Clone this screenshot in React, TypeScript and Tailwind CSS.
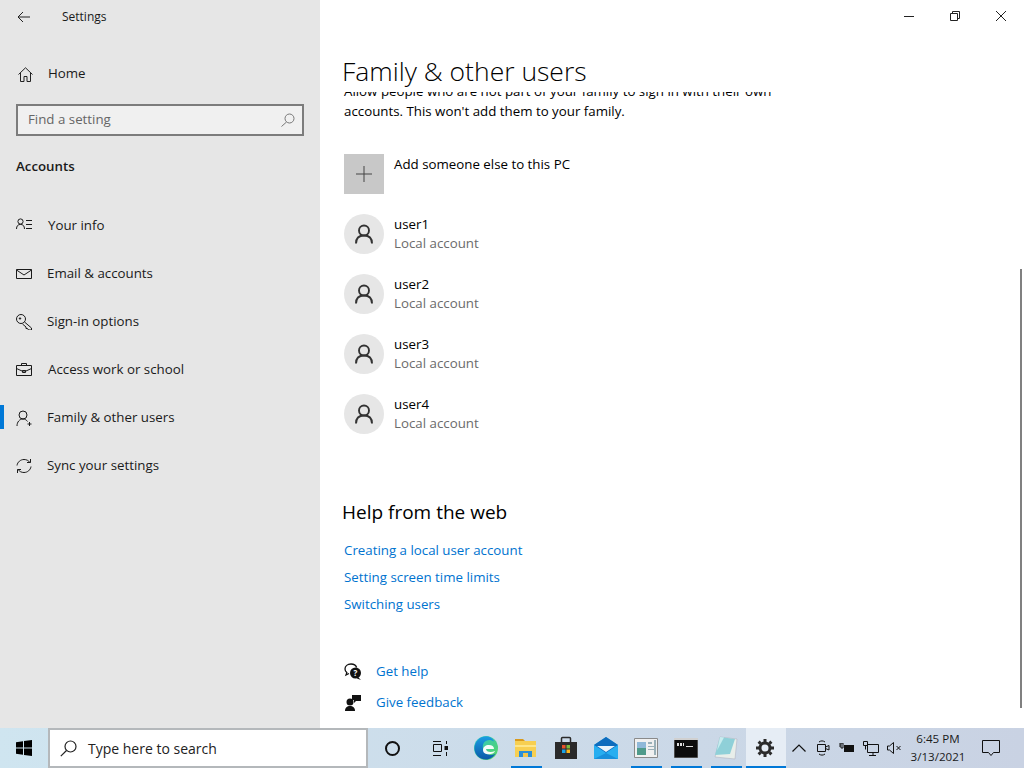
import type { ReactNode } from 'react';

const font = { fontFamily: '"Open Sans", "Noto Sans", sans-serif' };

function Ico({ children, w = 16, h = 16 }: { children: ReactNode; w?: number; h?: number }) {
  return (
    <svg width={w} height={h} viewBox={`0 0 ${w} ${h}`} fill="none" stroke="currentColor" strokeWidth="1" className="shrink-0">
      {children}
    </svg>
  );
}

const navItems: { label: string; gap: string; active?: boolean; icon: ReactNode }[] = [
  {
    label: 'Your info',
    gap: 'ml-[16px]',
    icon: (
      <Ico>
        <circle cx="4.5" cy="3.5" r="2.6" />
        <path d="M0.5 11c0-3 1.5-4.6 4-4.6s4 1.6 4 4.6M10 2.5h6M10 6.5h6M10 10.5h6" />
      </Ico>
    ),
  },
  {
    label: 'Email & accounts',
    gap: 'ml-[15px]',
    icon: (
      <Ico>
        <path d="M0.5 3.5h15v9h-15zM0.5 4l7.5 5 7.5-5" />
      </Ico>
    ),
  },
  {
    label: 'Sign-in options',
    gap: 'ml-[15px]',
    icon: (
      <Ico>
        <circle cx="5" cy="5" r="4.5" />
        <circle cx="4" cy="4.5" r="0.7" fill="currentColor" />
        <path d="M8.5 8l7 6v2h-3l-1-1.5h-1.5v-1.5l-3.5-3" />
      </Ico>
    ),
  },
  {
    label: 'Access work or school',
    gap: 'ml-[16px]',
    icon: (
      <Ico>
        <path d="M0.5 3.5h15v10h-15zM5.5 3.5v-2h5v2M0.5 6.5l5.5 2.5h4l5.5-2.5M6.5 8.5h3v2h-3z" />
      </Ico>
    ),
  },
  {
    label: 'Family & other users',
    gap: 'ml-[15px]',
    active: true,
    icon: (
      <Ico>
        <circle cx="7" cy="5" r="4" />
        <path d="M1 16c0-4 2.500-7 6-7 2 0 3.500 1 4.500 2.500M13.500 12v4M11.500 14h4" />
      </Ico>
    ),
  },
  {
    label: 'Sync your settings',
    gap: 'ml-[15px]',
    icon: (
      <Ico>
        <path d="M1 7.500C1.500 4 4.500 1.500 8 1.500c2.500 0 4.500 1 6 3M15 8.500c-.5 3.500-3.500 6-7 6-2.500 0-4.500-1-6-3M14.500 1v3.500H11M1.500 15v-3.500H5" />
      </Ico>
    ),
  },
];

function PersonIcon() {
  return (
    <svg width="18" height="20" viewBox="0 0 18 20" fill="none" stroke="#333" strokeWidth="1.900">
      <circle cx="9" cy="6.500" r="5" />
      <path d="M1 19.500c0-5 3-8 8-8s8 3 8 8" />
    </svg>
  );
}

function Sidebar() {
  return (
    <aside className="w-[320px] shrink-0 bg-[#e6e6e6] text-[#1a1a1a] flex flex-col">
      <div className="h-[33px] flex items-center text-[12px]">
        <svg width="14" height="12" viewBox="0 0 14 12" fill="none" stroke="#222" strokeWidth="1" className="ml-[17px]">
          <path d="M13 6H1M6 1L1 6l5 5" />
        </svg>
        <span className="ml-[31px]">Settings</span>
      </div>
      <div className="mt-[17px] h-[48px] flex items-center pl-[18px] text-[13.3px]">
        <svg width="15" height="15" viewBox="0 0 15 15" fill="none" stroke="#222" strokeWidth="1">
          <path d="M0.500 7.500L7.500 0.800l7 6.700M2.500 6v8.500h3.500V9.500h3v5h3.500V6" />
        </svg>
        <span className="ml-[15px]">Home</span>
      </div>
      <div className="mx-[16px] mt-[6px] h-[32px] border-2 border-[#7c7c7c] bg-[#f0f0f0] flex items-center justify-between pl-[10px] pr-[7px] text-[13.3px] text-[#666]">
        <span>Find a setting</span>
        <svg width="14" height="14" viewBox="0 0 14 14" fill="none" stroke="#777" strokeWidth="1">
          <circle cx="8.500" cy="5.500" r="4.500" />
          <path d="M5.500 9L0.500 13.500" />
        </svg>
      </div>
      <div className="mt-[20px] h-[20px] leading-[20px] pl-[16px] text-[13.3px] font-semibold">Accounts</div>
      <nav className="mt-[26px]">
        {navItems.map((it) => (
          <div key={it.label} className="relative h-[48px] flex items-center pl-[16px] text-[13.3px]">
            {it.active && <span className="absolute left-0 top-[11px] w-[4px] h-[24px] bg-[#0078d7]" />}
            {it.icon}
            <span className={it.gap}>{it.label}</span>
          </div>
        ))}
      </nav>
    </aside>
  );
}

function Main() {
  return (
    <main className="relative flex-1 bg-white text-black flex flex-col min-w-0">
      <div className="h-[32px] flex justify-end items-center text-[#222]">
        <div className="w-[46px] flex justify-center">
          <svg width="10" height="10" viewBox="0 0 10 10" stroke="#222" strokeWidth="1"><path d="M0 5.500h10" /></svg>
        </div>
        <div className="w-[46px] flex justify-center">
          <svg width="10" height="10" viewBox="0 0 10 10" fill="none" stroke="#222" strokeWidth="1">
            <path d="M0.500 2.500h7v7h-7zM2.500 2.500v-2h7v7h-2" />
          </svg>
        </div>
        <div className="w-[46px] flex justify-center">
          <svg width="10" height="10" viewBox="0 0 10 10" stroke="#222" strokeWidth="1"><path d="M0 0l10 10M10 0L0 10" /></svg>
        </div>
      </div>
      <h1 className="ml-[22px] mt-[21px] h-[39px] leading-[36px] text-[26.500px] font-light">Family &amp; other users</h1>
      <div className="flex-1 overflow-hidden pl-[24px]">
        <p className="w-[440px] -mt-[11px] text-[13.3px] leading-[20px]">
          Allow people who are not part of your family to sign in with their own accounts. This won't add them to your family.
        </p>
        <div className="mt-[33px] flex items-start h-[50px]">
          <div className="w-[40px] h-[40px] bg-[#c8c8c8] flex items-center justify-center">
            <svg width="16" height="16" viewBox="0 0 16 16" stroke="#444" strokeWidth="1"><path d="M8 0v16M0 8h16" /></svg>
          </div>
          <div className="ml-[10px] text-[13.3px] leading-[20px]">Add someone else to this PC</div>
        </div>
        {['user1', 'user2', 'user3', 'user4'].map((u) => (
          <div key={u} className="flex items-center h-[60px]">
            <div className="w-[40px] h-[40px] rounded-full bg-[#e6e6e6] flex items-center justify-center">
              <PersonIcon />
            </div>
            <div className="ml-[10px] text-[13.3px] leading-[19px]">
              <div>{u}</div>
              <div className="text-[#6b6b6b]">Local account</div>
            </div>
          </div>
        ))}
        <h2 className="-ml-[2px] mt-[54px] text-[19px] leading-[28px]">Help from the web</h2>
        <div className="mt-[11px] flex flex-col text-[13.3px] leading-[27px] text-[#0073cf]">
          <span>Creating a local user account</span>
          <span>Setting screen time limits</span>
          <span>Switching users</span>
        </div>
        <div className="mt-[44px] flex flex-col gap-[11px] text-[13.3px] text-[#0073cf]">
          <div className="h-[20px] flex items-center">
            <svg width="18" height="18" viewBox="0 0 18 18" className="shrink-0">
              <path d="M7 1c-3.500 0-6 2.200-6 5 0 1.500.7 2.700 1.800 3.600L2 12l3-1.500" fill="none" stroke="#111" strokeWidth="1.300" />
              <path d="M7 1c3 0 5 1.500 5.700 3.500" fill="none" stroke="#111" strokeWidth="1.300" />
              <circle cx="11.500" cy="10" r="5.500" fill="#111" />
              <path d="M14 14l3 3-4-1.500z" fill="#111" />
              <text x="11.500" y="13" fontSize="8" fontWeight="700" textAnchor="middle" fill="#fff">?</text>
            </svg>
            <span className="ml-[14px]">Get help</span>
          </div>
          <div className="h-[20px] flex items-center">
            <svg width="18" height="18" viewBox="0 0 18 18" fill="#111" className="shrink-0">
              <circle cx="6" cy="8" r="3.500" />
              <path d="M1 17c0-3.500 2-5 5-5s5 1.500 5 5z" />
              <path d="M8 1h9v6h-5l-2 2v-3H8z" />
            </svg>
            <span className="ml-[14px]">Give feedback</span>
          </div>
        </div>
      </div>
      <div className="absolute right-[2px] top-[269px] w-[2px] h-[439px] bg-[#808080]" />
    </main>
  );
}

function TaskBtn({ children, w = 40, open, current }: { children: ReactNode; w?: number; open?: boolean; current?: boolean }) {
  return (
    <div className={`relative h-full flex items-center justify-center shrink-0 ${current ? 'bg-[#e6edf5]' : ''}`} style={{ width: w }}>
      {children}
      {open && <span className={`absolute bottom-0 h-[2px] bg-[#0078d7] ${current ? 'left-0 right-0' : 'left-[5px] right-[4px]'}`} />}
    </div>
  );
}

function Taskbar() {
  return (
    <footer className="h-[40px] shrink-0 flex items-stretch bg-gradient-to-r from-[#cfe5f0] to-[#c9d2e3] text-black">
      <div className="w-[48px] flex items-center justify-center shrink-0">
        <svg width="16" height="16" viewBox="0 0 16 16" fill="#000">
          <path d="M0 2.300l7-1v6.200H0zM8 1.100L16 0v7.500H8zM0 8.500h7v6.200l-7-1zM8 8.500h8V16l-8-1.100z" />
        </svg>
      </div>
      <div className="w-[320px] shrink-0 border-2 border-[#b4b8bb] bg-white flex items-center pl-[10px] text-[14px] text-[#222]">
        <svg width="17" height="17" viewBox="0 0 17 17" fill="none" stroke="#222" strokeWidth="1.200">
          <circle cx="10.500" cy="6.500" r="5.500" />
          <path d="M6.500 10.500L0.800 16.200" />
        </svg>
        <span className="ml-[11px]">Type here to search</span>
      </div>
      <TaskBtn w={48}>
        <span className="w-[15px] h-[15px] rounded-full border-[2px] border-[#111]" />
      </TaskBtn>
      <TaskBtn w={50}>
        <svg width="16" height="15" viewBox="0 0 16 15" fill="none" stroke="#111" strokeWidth="1" className="mr-[3px]">
          <path d="M1 .5h8M1 14.500h8M1.500 3.500h8v7h-8zM14.500 0v3M14.500 11v4" />
          <rect x="12.500" y="5" width="3.500" height="4" fill="#111" stroke="none" />
        </svg>
      </TaskBtn>
      <TaskBtn>
        <svg width="24" height="24" viewBox="0 0 24 24">
          <defs>
            <linearGradient id="edgeA" x1="0" y1="0" x2="1" y2="1">
              <stop offset="0" stopColor="#2bc3d2" />
              <stop offset="1" stopColor="#5bd85c" />
            </linearGradient>
            <linearGradient id="edgeB" x1="0" y1="0" x2="0" y2="1">
              <stop offset="0" stopColor="#1b9de2" />
              <stop offset="1" stopColor="#0b5aa8" />
            </linearGradient>
          </defs>
          <circle cx="12" cy="12" r="12" fill="url(#edgeA)" />
          <path d="M0.500 12C1 5 6 .5 12 .5c4 0 7 2 8 5-3-2.500-8-2-10 1-2.500 3.500-1 9 3.500 11.500 3 1.500 6 1 8-.5-2 3.500-5.500 6-9.500 6C5 23.500 0.300 18 0.500 12z" fill="url(#edgeB)" />
          <path d="M9 14c0-3 2.500-5 6-5 3 0 5 1.500 5 4h-8c0 3 5 4 9 2-1 4-12 5-12-1z" fill="#fff" opacity="0.950" />
        </svg>
      </TaskBtn>
      <TaskBtn open>
        <svg width="22" height="20" viewBox="0 0 22 20">
          <path d="M0 1h8l2 2h-10z" fill="#d99a1c" />
          <path d="M0 3h21v16H0z" fill="#f7cf52" />
          <path d="M0 7h21v2H0z" fill="#fde68a" />
          <path d="M4 19v-6h13v6z" fill="#2a8fd8" />
          <path d="M8 15h5v4H8z" fill="#f5c64a" />
        </svg>
      </TaskBtn>
      <TaskBtn>
        <svg width="24" height="24" viewBox="0 0 24 24">
          <path d="M7.500 6V2.500a1 1 0 0 1 1-1h7a1 1 0 0 1 1 1V6" fill="none" stroke="#2a2a2a" strokeWidth="1.500" />
          <path d="M1 6h22v17H1z" fill="#2a2a2a" />
          <path d="M8 9h3.500v3.500H8z" fill="#e8502a" />
          <path d="M12.500 9H16v3.500h-3.500z" fill="#7fba3a" />
          <path d="M8 13.500h3.500V17H8z" fill="#1aa3e8" />
          <path d="M12.500 13.500H16V17h-3.500z" fill="#fbb81e" />
        </svg>
      </TaskBtn>
      <TaskBtn>
        <svg width="24" height="22" viewBox="0 0 24 22">
          <path d="M0 8L12 0l12 8v14H0z" fill="#1a9fe8" />
          <path d="M0 8L12 0l12 8-12 8z" fill="#0f6cbd" />
          <path d="M3 9h18l-9 6z" fill="#eaf4fb" />
          <path d="M0 8l12 8 12-8v14H0z" fill="#27aef0" />
          <path d="M0 22l12-6 12 6z" fill="#1790dc" />
        </svg>
      </TaskBtn>
      <TaskBtn open>
        <svg width="24" height="20" viewBox="0 0 24 20">
          <path d="M.5.500h23v19H.500z" fill="#f0f0f0" stroke="#8a8a8a" />
          <path d="M3 4h9v13H3z" fill="#4f9a8a" />
          <path d="M3 4h9v6H3z" fill="#8fb8d8" />
          <path d="M14 4h4v2h-4zM14 8h6v1h-6zM14 11h6v1h-6zM20 2h2v15h-2z" fill="#9ab0b8" />
        </svg>
      </TaskBtn>
      <TaskBtn open>
        <svg width="24" height="20" viewBox="0 0 24 20">
          <path d="M0 0h24v20H0z" fill="#0c0c0c" stroke="#8a8a8a" />
          <path d="M0 0h24v2H0z" fill="#d0d0d0" />
          <path d="M3 5h2v3H3zM6 5h2v3H6zM9 5h1v3H9zM12 8h7v1h-7z" fill="#ddd" />
        </svg>
      </TaskBtn>
      <TaskBtn open>
        <svg width="24" height="24" viewBox="0 0 24 24">
          <path d="M6 1l17 2-2 20L1 21z" fill="#e8eeea" stroke="#aab" strokeWidth="0.500" />
          <path d="M6 1l15 2-5 15L1 19z" fill="#8fd0d8" />
          <path d="M6 1l4 .5-7 13z" fill="#c8ecef" />
        </svg>
      </TaskBtn>
      <TaskBtn open current>
        <svg width="18" height="18" viewBox="0 0 18 18" fill="none" className="mr-[2px]">
          <circle cx="9" cy="9" r="5" stroke="#2b2b2b" strokeWidth="3" />
          <path d="M9 0v3M9 15v3M0 9h3M15 9h3M2.600 2.600l2.100 2.100M13.300 13.300l2.100 2.100M2.600 15.400l2.100-2.100M13.300 4.700l2.100-2.100" stroke="#2b2b2b" strokeWidth="3" />
        </svg>
      </TaskBtn>
      <div className="flex-1 flex items-center min-w-0">
        <svg width="14" height="8" viewBox="0 0 14 8" fill="none" stroke="#111" strokeWidth="1.200" className="ml-[6px]">
          <path d="M.5 7.500L7 1l6.500 6.500" />
        </svg>
        <svg width="14" height="16" viewBox="0 0 14 16" fill="none" stroke="#111" strokeWidth="1" className="ml-[10px]">
          <path d="M1.500 4.500h8v7h-8zM9.500 7l3.500-1.500v4.500l-3.500-1.500M3 2c2-1.500 4-1.500 6 0M3 14c2 1.500 4 1.500 6 0" />
        </svg>
        <svg width="16" height="10" viewBox="0 0 16 10" className="ml-[9px]">
          <path d="M0 1h2M0 3h2" stroke="#111" strokeWidth="1" />
          <path d="M2 0h2v5H2z" fill="none" stroke="#111" />
          <path d="M5 2h10v7H5z" fill="#111" />
        </svg>
        <svg width="16" height="15" viewBox="0 0 16 15" fill="none" stroke="#111" strokeWidth="1" className="ml-[8px]">
          <path d="M4.500 3.500h11v8h-11zM6 14.500h7M10 11.500v3M.5.500h4v4h-4zM2.500 4.500v4" />
        </svg>
        <svg width="15" height="12" viewBox="0 0 15 12" fill="none" stroke="#111" strokeWidth="1" className="ml-[8px]">
          <path d="M.5 4h2l4-3.500v11L2.500 8h-2zM9.500 4l4 4M13.500 4l-4 4" />
        </svg>
        <div className="ml-[6px] w-[60px] text-center text-[11.600px] leading-[18px] text-[#1a1a1a]">
          <div>6:45 PM</div>
          <div>3/13/2021</div>
        </div>
        <svg width="18" height="16" viewBox="0 0 18 16" fill="none" stroke="#111" strokeWidth="1" className="ml-[14px]">
          <path d="M.5.500h17v12h-6l-2.500 3-2.500-3h-6z" />
        </svg>
      </div>
    </footer>
  );
}

export default function App() {
  return (
    <div className="w-[1024px] h-[768px] flex flex-col overflow-hidden" style={font}>
      <div className="flex-1 flex min-h-0">
        <Sidebar />
        <Main />
      </div>
      <Taskbar />
    </div>
  );
}
